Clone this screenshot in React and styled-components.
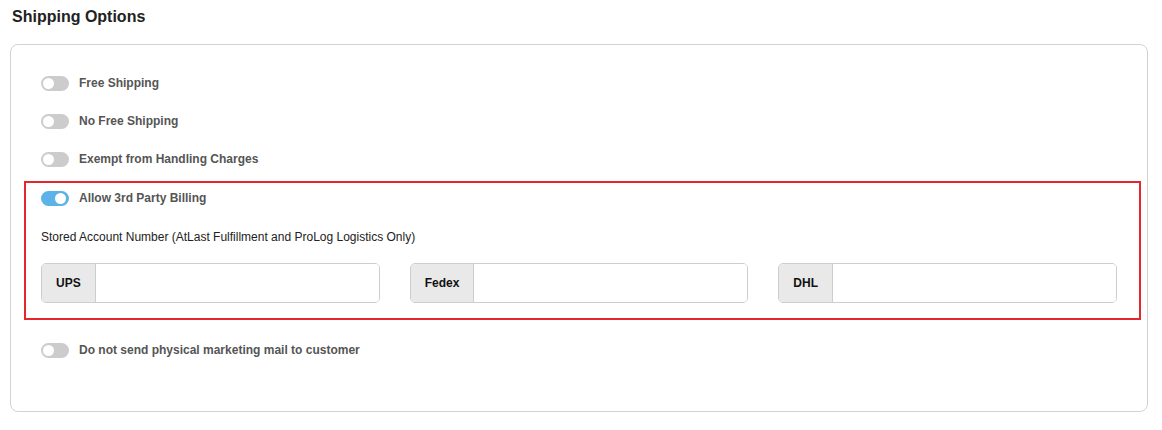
import React, { useState } from 'react'
import styled, { createGlobalStyle } from 'styled-components'

const GlobalStyle = createGlobalStyle`
    body {
        margin: 0;
        background: #fff;
        font-family: "Liberation Sans", Arial, sans-serif;
    }
`

const carriers = ['UPS', 'Fedex', 'DHL']

function Toggle({ label, on, onChange }) {
    return (
        <ToggleRow onClick={onChange}>
            <Track $on={on}>
                <Knob $on={on} />
            </Track>
            <ToggleLabel>{label}</ToggleLabel>
        </ToggleRow>
    )
}

function App() {
    // which switches are flipped on
    const [opts, setOpts] = useState({
        free: false,
        noFree: false,
        exempt: false,
        thirdParty: true,
        noMail: false,
    })

    const flip = (key) => setOpts({ ...opts, [key]: !opts[key] })

    return (
        <Page>
            <GlobalStyle />
            <Title>Shipping Options</Title>
            <Card>
                <Toggle label="Free Shipping" on={opts.free} onChange={() => flip('free')} />
                <Toggle label="No Free Shipping" on={opts.noFree} onChange={() => flip('noFree')} />
                <Toggle label="Exempt from Handling Charges" on={opts.exempt} onChange={() => flip('exempt')} />

                <Highlight>
                    <Toggle
                        label="Allow 3rd Party Billing"
                        on={opts.thirdParty}
                        onChange={() => flip('thirdParty')}
                    />
                    <Note>Stored Account Number (AtLast Fulfillment and ProLog Logistics Only)</Note>
                    <Accounts>
                        {carriers.map((name) => (
                            <InputGroup key={name}>
                                <Addon>{name}</Addon>
                                <Field type="text" />
                            </InputGroup>
                        ))}
                    </Accounts>
                </Highlight>

                <Toggle
                    label="Do not send physical marketing mail to customer"
                    on={opts.noMail}
                    onChange={() => flip('noMail')}
                />
            </Card>
        </Page>
    )
}

export default App

const Page = styled.div`
    width: 1162px;
    padding: 7px 0 0 10px;
    box-sizing: border-box;
`

const Title = styled.h2`
    margin: 0 0 18px 2px;
    font-size: 16px;
    line-height: 19px;
    font-weight: bold;
    color: #222;
`

const Card = styled.div`
    width: 1138px;
    box-sizing: border-box;
    border: 1px solid #d2d2d2;
    border-radius: 8px;
    padding: 30px 30px 53px 30px;
    display: flex;
    flex-direction: column;
    gap: 22px;
`

const ToggleRow = styled.div`
    display: flex;
    align-items: center;
    gap: 10px;
    height: 16px;
    cursor: pointer;
`

const Track = styled.div`
    position: relative;
    width: 28px;
    height: 15px;
    border-radius: 8px;
    background: ${(p) => (p.$on ? '#5cb3e7' : '#cccccc')};
    flex-shrink: 0;
`

const Knob = styled.div`
    position: absolute;
    top: 2px;
    left: ${(p) => (p.$on ? '14px' : '2px')};
    width: 11px;
    height: 11px;
    border-radius: 50%;
    background: #fff;
`

const ToggleLabel = styled.span`
    font-size: 12px;
    font-weight: bold;
    color: #555;
`

const Highlight = styled.div`
    margin: -8px -24px 0 -17px;
    padding: 7px 22px 15px 15px;
    border: 2px solid #e5262d;
    display: flex;
    flex-direction: column;
`

const Note = styled.div`
    margin-top: 23px;
    font-size: 12px;
    line-height: 16px;
    color: #222;
`

const Accounts = styled.div`
    margin-top: 18px;
    display: grid;
    grid-template-columns: repeat(3, 1fr);
    column-gap: 30px;
`

const InputGroup = styled.div`
    display: flex;
    height: 40px;
    border: 1px solid #cdcdcd;
    border-radius: 5px;
    overflow: hidden;
    box-sizing: border-box;
`

const Addon = styled.span`
    display: flex;
    align-items: center;
    padding: 0 14px;
    background: #e9e9e9;
    border-right: 1px solid #cdcdcd;
    font-size: 12px;
    font-weight: bold;
    color: #111;
`

const Field = styled.input`
    flex: 1;
    min-width: 0;
    border: none;
    outline: none;
    padding: 0 10px;
    font-size: 12px;
    font-family: inherit;
`
